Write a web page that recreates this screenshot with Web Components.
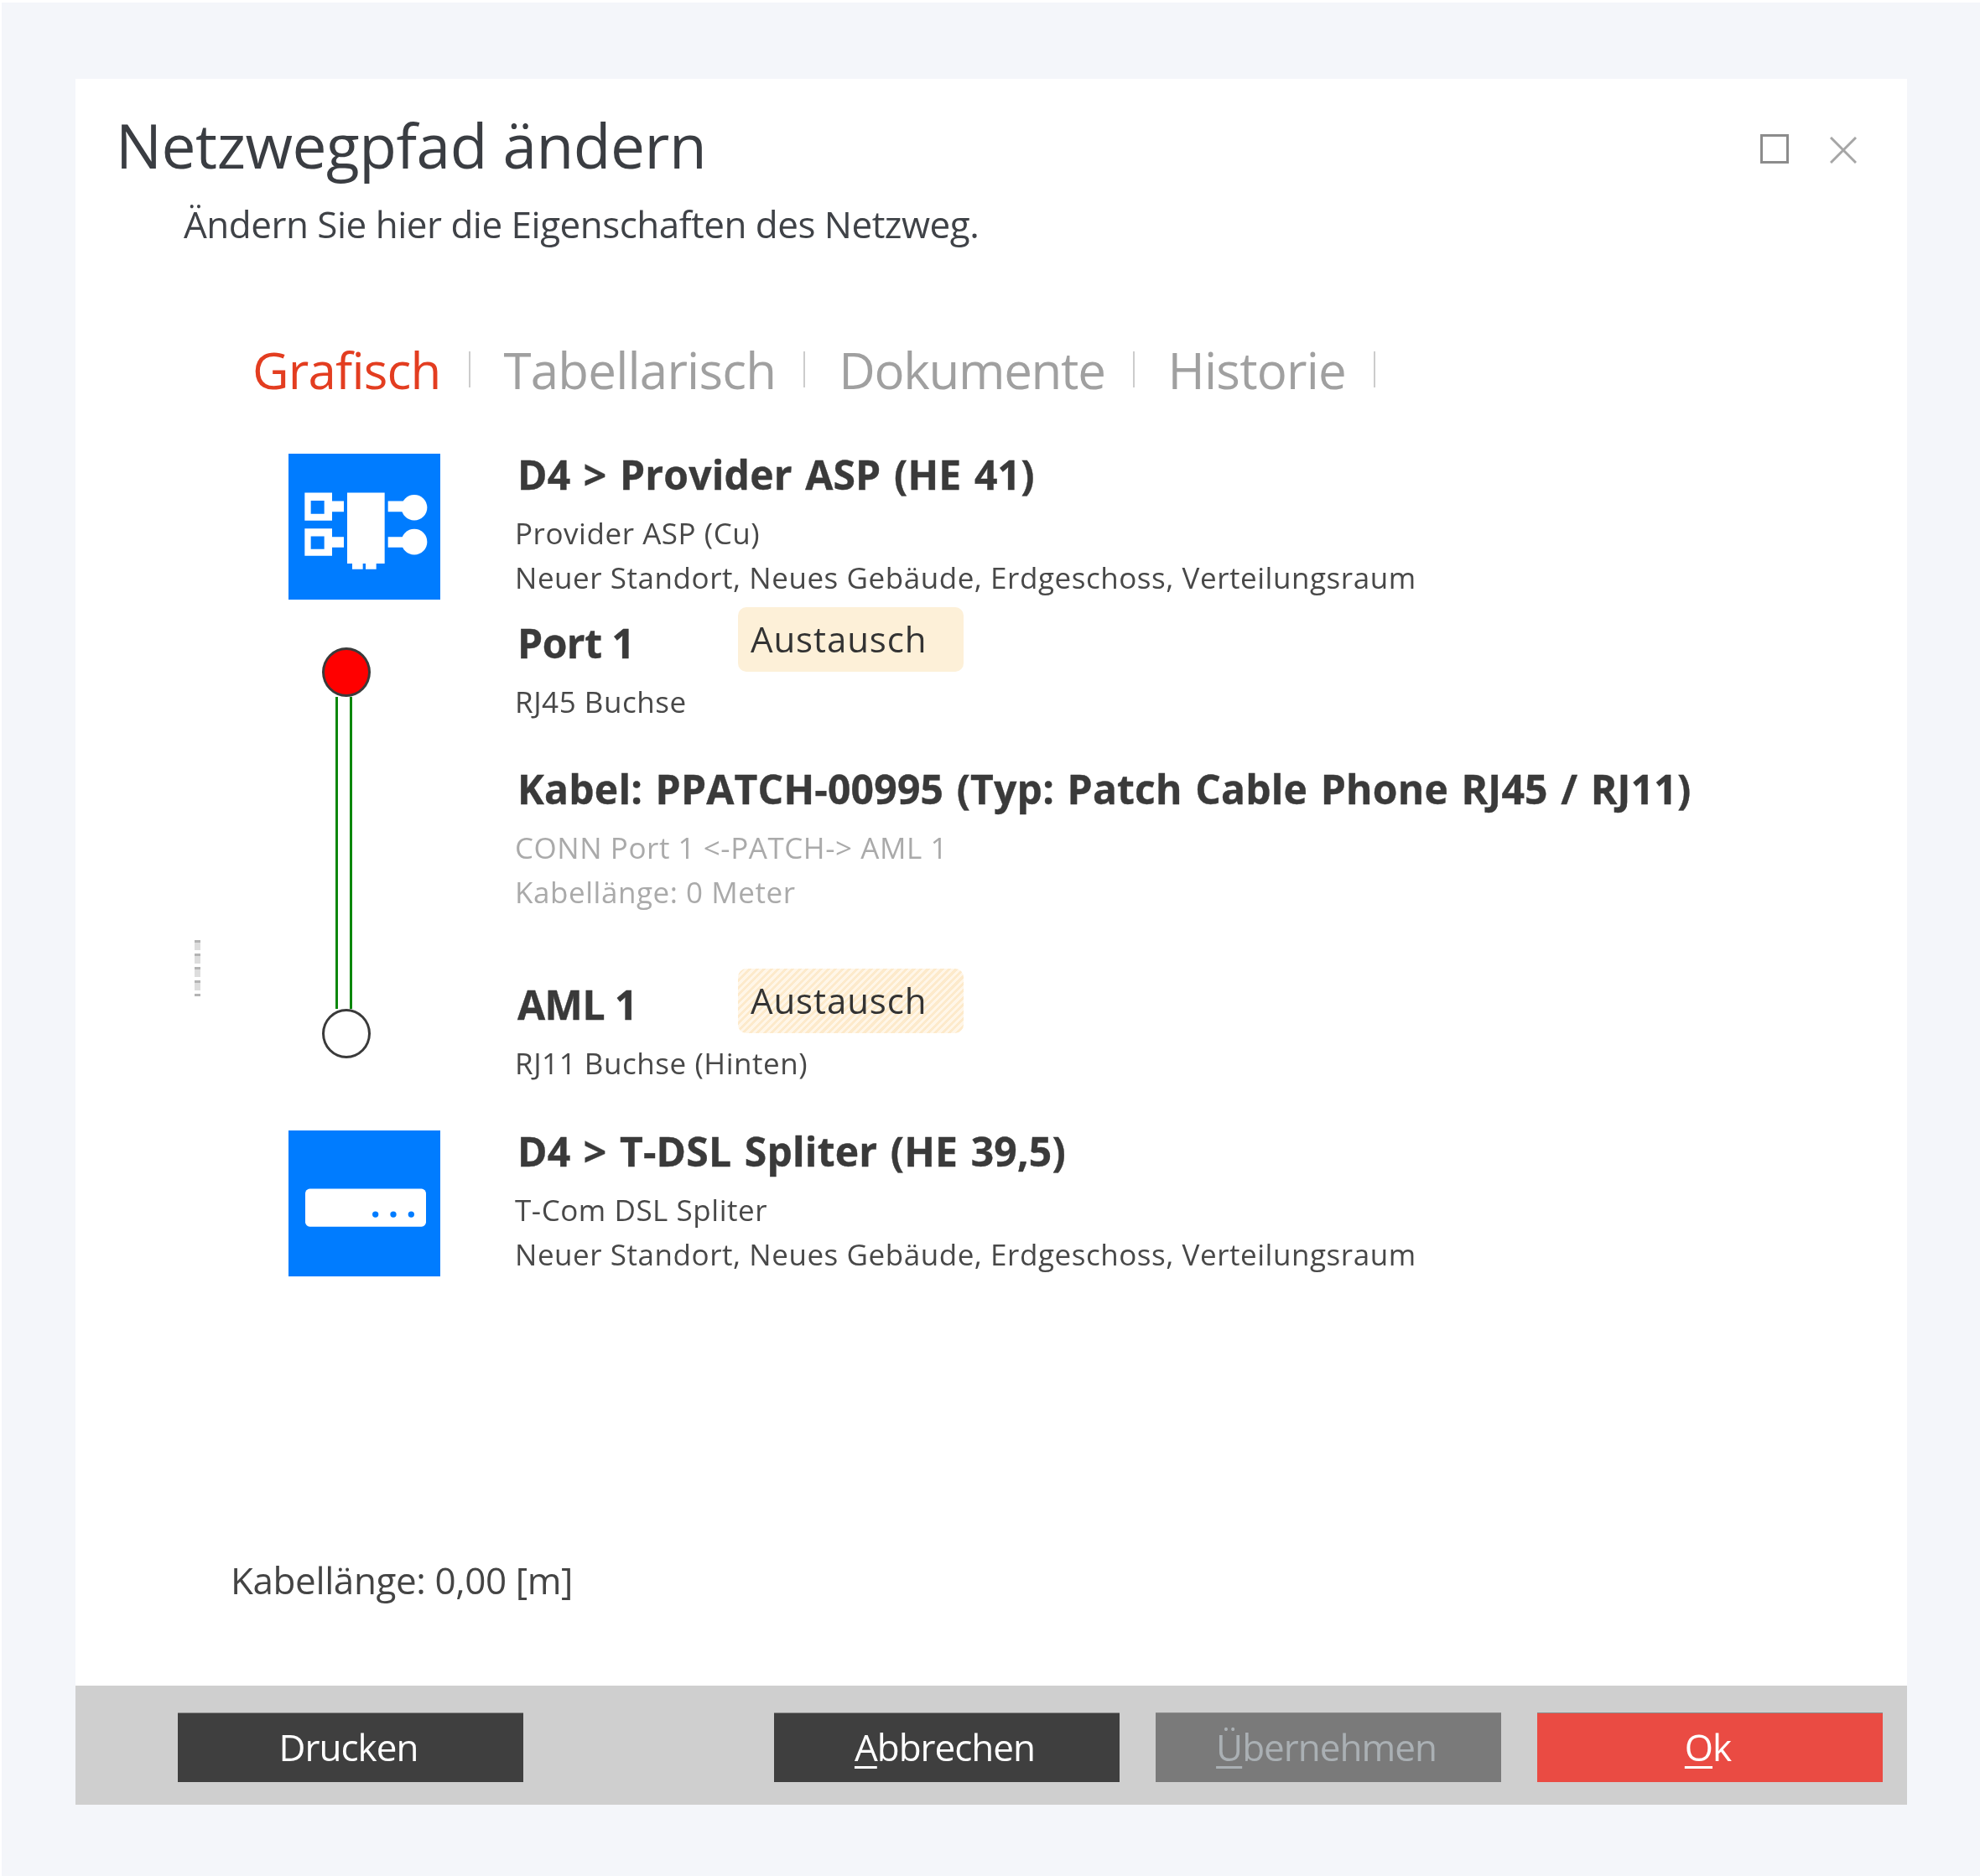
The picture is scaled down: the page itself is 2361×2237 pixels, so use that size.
<!DOCTYPE html>
<html lang="de">
<head>
<meta charset="utf-8">
<title>Netzwegpfad ändern</title>
<style>
  html, body { margin: 0; background: #fff; }
  body { font-family: "Open Sans", "Noto Sans", sans-serif; color: #333; }
</style>
</head>
<body>
<netz-dialog>
  <dialog-head slot="head" heading="Netzwegpfad ändern" hint="Ändern Sie hier die Eigenschaften des Netzweg."></dialog-head>
  <tab-bar slot="tabs">
    <tab-item active>Grafisch</tab-item>
    <tab-item>Tabellarisch</tab-item>
    <tab-item style="letter-spacing:-1.3px">Dokumente</tab-item>
    <tab-item>Historie</tab-item>
  </tab-bar>
  <path-view slot="path">
    <path-device kind="provider" heading="D4 &gt; Provider ASP (HE 41)">
      <div>Provider ASP (Cu)</div>
      <div>Neuer Standort, Neues Gebäude, Erdgeschoss, Verteilungsraum</div>
    </path-device>
    <path-link slot="link"></path-link>
    <path-port slot="a" heading="Port 1" badge="Austausch">RJ45 Buchse</path-port>
    <path-cable slot="cable" heading="Kabel: PPATCH-00995 (Typ: Patch Cable Phone RJ45 / RJ11)">
      <div>CONN Port 1 &lt;-PATCH-&gt; AML 1</div>
      <div>Kabellänge: 0 Meter</div>
    </path-cable>
    <path-port slot="b" heading="AML 1" badge="Austausch" hatched>RJ11 Buchse (Hinten)</path-port>
    <path-device slot="end" kind="splitter" heading="D4 &gt; T-DSL Spliter (HE 39,5)">
      <div>T-Com DSL Spliter</div>
      <div>Neuer Standort, Neues Gebäude, Erdgeschoss, Verteilungsraum</div>
    </path-device>
  </path-view>
  <span slot="length">Kabellänge: 0,00 [m]</span>
  <dialog-button slot="left" tone="dark">Drucken</dialog-button>
  <dialog-button slot="right" tone="dark" key="A">bbrechen</dialog-button>
  <dialog-button slot="right" tone="off" key="Ü">bernehmen</dialog-button>
  <dialog-button slot="right" tone="red" key="O">k</dialog-button>
</netz-dialog>
<script>
function mount(el, html){
    el.attachShadow({mode: 'open'}).innerHTML = html;
}

/** Outer page frame with the white dialog and its grey button bar */
customElements.define('netz-dialog', class extends HTMLElement {
    connectedCallback(){
        mount(this, `<style>
        :host { display: block; padding: 3px 0 0 2px; }
        .page { background: #f4f6fa; padding: 91px 87px 85px 88px; }
        .box { background: #fff; height: 2058px; display: flex; flex-direction: column; filter: blur(.5px); }
        main { flex: 1; display: flex; flex-direction: column; }
        .length { margin: auto 0 98px 185px; font-size: 44px; line-height: 56px; color: #444; letter-spacing: -.4px; }
        footer { display: flex; background: #cfcfcf; padding: 32px 29px 27px 122px; }
        .right { margin-left: auto; display: flex; gap: 43px; }
        </style>
        <div class="page"><div class="box">
            <slot name="head"></slot>
            <main>
                <slot name="tabs"></slot>
                <slot name="path"></slot>
                <div class="length"><slot name="length"></slot></div>
            </main>
            <footer>
                <slot name="left"></slot>
                <div class="right"><slot name="right"></slot></div>
            </footer>
        </div></div>`);
    }
});

customElements.define('dialog-head', class extends HTMLElement {
    connectedCallback(){
        mount(this, `<style>
        :host { display: flex; padding: 34px 60px 0 48px; }
        .text { flex: 1; }
        h1 { margin: 0; font-weight: 400; font-size: 73px; line-height: 90px; color: #3a3d42; letter-spacing: -.45px; }
        p { margin: 21px 0 -1px 81px; font-size: 44px; line-height: 56px; color: #3f4247; letter-spacing: -.5px; }
        .ctl { display: flex; gap: 49px; margin-top: 32px; align-items: flex-start; }
        svg { display: block; }
        </style>
        <div class="text"><h1>${this.getAttribute('heading')}</h1><p>${this.getAttribute('hint')}</p></div>
        <div class="ctl">
            <svg width="34" height="35" viewBox="0 0 34 35"><rect x="1.5" y="1.5" width="31" height="32" fill="none" stroke="#8c8c8c" stroke-width="3"/></svg>
            <svg width="32" height="32" viewBox="0 0 32 32" style="margin-top:3px"><path d="M1 1L31 31M31 1L1 31" fill="none" stroke="#a6a6a6" stroke-width="3"/></svg>
        </div>`);
    }
});

customElements.define('tab-bar', class extends HTMLElement {
    connectedCallback(){
        mount(this, `<style>
        :host { display: flex; margin: 112px 0 65px 211px; letter-spacing: -.8px; }
        </style><slot></slot>`);
    }
});

customElements.define('tab-item', class extends HTMLElement {
    connectedCallback(){
        mount(this, `<style>
        :host { display: flex; font-size: 60px; line-height: 70px; color: #a0a0a0; }
        :host([active]) { color: #e33d20; }
        i { width: 2px; height: 43px; margin: 13px 40px 0 33px; background: #ccc; }
        </style><slot></slot><i></i>`);
    }
});

/** The column layout of the path: symbol column, then text column */
customElements.define('path-view', class extends HTMLElement {
    connectedCallback(){
        mount(this, `<style>
        :host { display: block; padding-left: 254px; }
        .mid { display: grid; grid-template-columns: 270px 1fr; grid-template-rows: 200px 231px 201px; }
        ::slotted([slot=link]) { grid-row: 1 / 4; }
        </style>
        <slot></slot>
        <div class="mid">
            <slot name="link"></slot>
            <slot name="a"></slot>
            <slot name="cable"></slot>
            <slot name="b"></slot>
        </div>
        <slot name="end"></slot>`);
    }
});

const DEVICE_ICONS = {
    provider: `<path fill="#fff" fill-rule="evenodd" d="M130 202h98v100h-98zM152 230h48v48h-48zM130 330h98v98h-98zM152 358h48v46h-48z"/>
        <path fill="#fff" d="M228 232h42v38h-42zM228 360h42v38h-42zM282 202h134v254h-30v20h-38v-20h-10v20h-38v-20h-18zM428 232h60v38h-60zM428 360h60v38h-60z"/>
        <circle cx="522" cy="255" r="46" fill="#fff"/><circle cx="522" cy="378" r="46" fill="#fff"/>`,
    splitter: `<rect x="132" y="262" width="432" height="136" rx="16" fill="#fff"/>
        <circle cx="383" cy="354" r="11" fill="#007cff"/><circle cx="447" cy="354" r="11" fill="#007cff"/><circle cx="511" cy="354" r="11" fill="#007cff"/>`
};

const TEXT_STYLES = `
    h2 { margin: -1px 0 1px; font-size: 48px; line-height: 52px; font-weight: 700; color: #3a3a3a; letter-spacing: .2px; word-spacing: 2.8px; padding-left: 3px; -webkit-text-stroke: .4px #3a3a3a; }
    .sub { margin-top: 17px; font-size: 35px; line-height: 53px; letter-spacing: .55px; color: #484848; }
`;

customElements.define('path-device', class extends HTMLElement {
    connectedCallback(){
        const kind = this.getAttribute('kind');
        const box = kind === 'provider' ? '72 62 543 523' : '72 52 543 525';
        mount(this, `<style>
        :host { display: flex; height: 175px; }
        svg { display: block; width: 181px; height: 174px; margin-right: 89px; flex: none; background: #007cff; }
        ${TEXT_STYLES}
        </style>
        <svg viewBox="${box}" preserveAspectRatio="none">${DEVICE_ICONS[kind]}</svg>
        <div><h2>${this.getAttribute('heading').replace('>', '&gt;')}</h2><div class="sub"><slot></slot></div></div>`);
    }
});

/** Red and white connector with the double green cable between them */
customElements.define('path-link', class extends HTMLElement {
    connectedCallback(){
        mount(this, `<style>
        :host { display: flex; flex-direction: column; align-items: center; width: 58px; margin-left: 40px; padding: 56px 0 86px; position: relative; }
        .dot { width: 52px; height: 53px; border: 3px solid #3a3a3a; border-radius: 50%; background: #fff; flex: none; position: relative; }
        .dot.on { background: #f00; }
        .wire { flex: 1; width: 14px; margin-left: -6px; border: solid #0a870a; border-width: 0 3px; }
        .grip { position: absolute; left: -152px; top: 405px; width: 7px; height: 67px; background: repeating-linear-gradient(#b4b4b4 0 3px, #ddd 3px 12px, #fff 12px 16px); }
        </style>
        <div class="dot on"></div><div class="wire"></div><div class="dot"></div><div class="grip"></div>`);
    }
});

customElements.define('path-port', class extends HTMLElement {
    connectedCallback(){
        mount(this, `<style>
        :host { display: block; }
        ${TEXT_STYLES}
        .top { display: flex; height: 94px; }
        h2 { margin: 25px 0 0; width: 266px; flex: none; box-sizing: border-box; letter-spacing: -.5px; word-spacing: 0; }
        .badge { height: 77px; width: 254px; margin-top: 8px; padding-left: 15px; border-radius: 10px; background: #fdf0d8; font-size: 42px; line-height: 75px; color: #333; letter-spacing: .9px; }
        :host([hatched]) .badge { background: repeating-linear-gradient(135deg, #fff6e8 0 3px, #fdeacb 3px 6px); }
        .sub { margin-top: 0; }
        </style>
        <div class="top"><h2>${this.getAttribute('heading')}</h2><div class="badge">${this.getAttribute('badge')}</div></div>
        <div class="sub"><slot></slot></div>`);
    }
});

customElements.define('path-cable', class extends HTMLElement {
    connectedCallback(){
        mount(this, `<style>
        :host { display: block; }
        ${TEXT_STYLES}
        .sub { color: #aaa; }
        </style>
        <h2>${this.getAttribute('heading')}</h2><div class="sub"><slot></slot></div>`);
    }
});

customElements.define('dialog-button', class extends HTMLElement {
    connectedCallback(){
        const key = this.getAttribute('key');
        mount(this, `<style>
        :host { display: flex; box-sizing: border-box; width: 412px; height: 83px; padding: 0 5px 2px 0; align-items: center; justify-content: center; border-top: 1px solid #8a8a8a; font-size: 44px; letter-spacing: -1px; color: #fff; }
        :host([tone=dark]) { background: #3f3f3f; }
        :host([tone=off]) { background: #7a7a7a; color: #aab0b4; }
        :host([tone=red]) { background: #ea4b43; }
        u { text-decoration-thickness: 3px; text-underline-offset: 6px; }
        </style>${key ? `<u>${key}</u>` : ''}<slot></slot>`);
    }
});
</script>
</body>
</html>
